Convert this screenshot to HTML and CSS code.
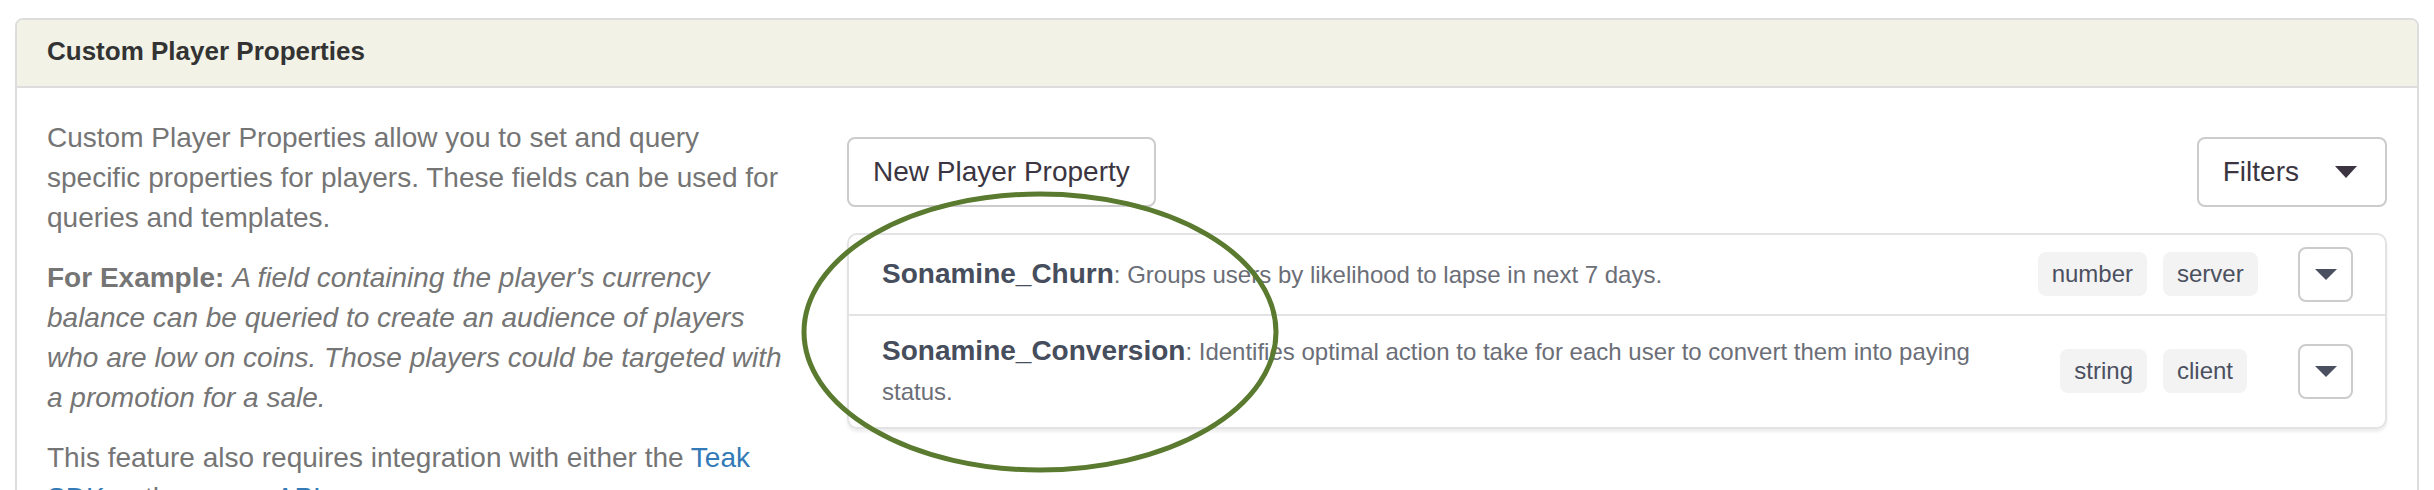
FILE: index.html
```html
<!DOCTYPE html>
<html lang="en">
<head>
<meta charset="utf-8">
<title>Custom Player Properties</title>
<link rel="stylesheet" href="styles.css">
</head>
<body>
<div class="page">
  <div class="panel">
    <div class="panel-heading">
      <h3 class="panel-title">Custom Player Properties</h3>
    </div>
    <div class="panel-body">
      <div class="info">
        <p>Custom Player Properties allow you to set and query specific properties for players. These fields can be used for queries and templates.</p>
        <p><strong>For Example:</strong> <em>A field containing the player's currency balance can be queried to create an audience of players who are low on coins. Those players could be targeted with a promotion for a sale.</em></p>
        <p>This feature also requires integration with either the <a href="#">Teak SDK</a> or the server <a href="#">API</a>.</p>
      </div>
      <div class="main">
        <div class="toolbar">
          <button class="btn" type="button">New Player Property</button>
          <button class="btn btn-filters" type="button"><span>Filters</span><span class="caret"></span></button>
        </div>
        <div class="list">
          <div class="item">
            <div class="desc"><strong>Sonamine_Churn</strong>: Groups users by likelihood to lapse in next 7 days.</div>
            <div class="type"><span class="tag">number</span></div>
            <div class="source"><span class="tag">server</span></div>
            <button class="toggle" type="button"><span class="caret"></span></button>
          </div>
          <div class="item">
            <div class="desc"><strong>Sonamine_Conversion</strong>: Identifies optimal action to take for each user to convert them into paying status.</div>
            <div class="type"><span class="tag">string</span></div>
            <div class="source"><span class="tag">client</span></div>
            <button class="toggle" type="button"><span class="caret"></span></button>
          </div>
        </div>
      </div>
    </div>
  </div>
</div>
<svg class="annotation" width="2434" height="490" viewBox="0 0 2434 490" aria-hidden="true">
  <ellipse cx="1040" cy="332" rx="236" ry="138" fill="none" stroke="#5a7a30" stroke-width="5"/>
</svg>
</body>
</html>
```

FILE: styles.css
```css
* {
  box-sizing: border-box;
}

html,
body {
  margin: 0;
  padding: 0;
  background: #fff;
  overflow: hidden;
}

body {
  height: 490px;
  font-family: "Liberation Sans", Arial, Helvetica, sans-serif;
  font-size: 28px;
  line-height: 40px;
  color: #333;
}

.page {
  padding: 18px 15px 0;
}

.panel {
  border: 2px solid #ddd;
  border-radius: 8px;
  background: #fff;
}

.panel-heading {
  background: #f2f2e6;
  border-bottom: 2px solid #ddd;
  border-radius: 6px 6px 0 0;
  padding: 17px 30px 20px;
}

.panel-title {
  margin: 0;
  font-size: 26px;
  line-height: 1.1;
  font-weight: bold;
  color: #333;
}

.panel-body {
  padding: 30px;
  display: grid;
  grid-template-columns: 740px 1fr;
  column-gap: 60px;
}

.info p {
  margin: 0 0 20px;
  color: #757575;
}

.info a {
  color: #337ab7;
  text-decoration: none;
}

.main {
  padding-top: 19px;
}

.toolbar {
  display: flex;
  justify-content: space-between;
  align-items: flex-start;
}

.btn {
  margin: 0;
  display: inline-flex;
  align-items: center;
  font-family: inherit;
  font-size: 28px;
  line-height: 40px;
  color: #3b3541;
  background: #fff;
  border: 2px solid #ccc;
  border-radius: 8px;
  padding: 13px 24px;
}

.btn-filters {
  padding-right: 28px;
}

.btn-filters .caret {
  margin-left: 36px;
  width: 0;
  height: 0;
  border-left: 11px solid transparent;
  border-right: 11px solid transparent;
  border-top: 12px solid #3c3441;
}

.list {
  margin-top: 26px;
  border: 2px solid #e3e3e6;
  border-radius: 10px;
  box-shadow: 0 3px 3px rgba(0, 0, 0, 0.07);
}

.item {
  display: flex;
  align-items: center;
  padding: 12px 32px 12px 33px;
}

.item + .item {
  border-top: 2px solid #e3e3e6;
}

.desc {
  flex: 1;
  min-width: 0;
  font-size: 24px;
  line-height: 40px;
  color: #6b6e77;
  padding: 4px 0 3px;
}

.desc strong {
  font-size: 28px;
  line-height: 1;
  color: #464d5c;
}

.type {
  margin-left: 30px;
}

.source {
  width: 95px;
  margin-left: 16px;
}

.tag {
  display: inline-block;
  height: 44px;
  line-height: 44px;
  padding: 0 14px;
  font-size: 24px;
  color: #4b5060;
  background: #f3f3f4;
  border-radius: 8px;
  white-space: nowrap;
}

.toggle {
  margin: 0 0 0 40px;
  width: 55px;
  height: 55px;
  padding: 0;
  flex: none;
  display: flex;
  align-items: center;
  justify-content: center;
  background: #fff;
  border: 2px solid #ccc;
  border-radius: 8px;
}

.toggle .caret {
  width: 0;
  height: 0;
  border-left: 11px solid transparent;
  border-right: 11px solid transparent;
  border-top: 11px solid #4b5060;
}

.annotation {
  position: absolute;
  left: 0;
  top: 0;
  pointer-events: none;
}
```
